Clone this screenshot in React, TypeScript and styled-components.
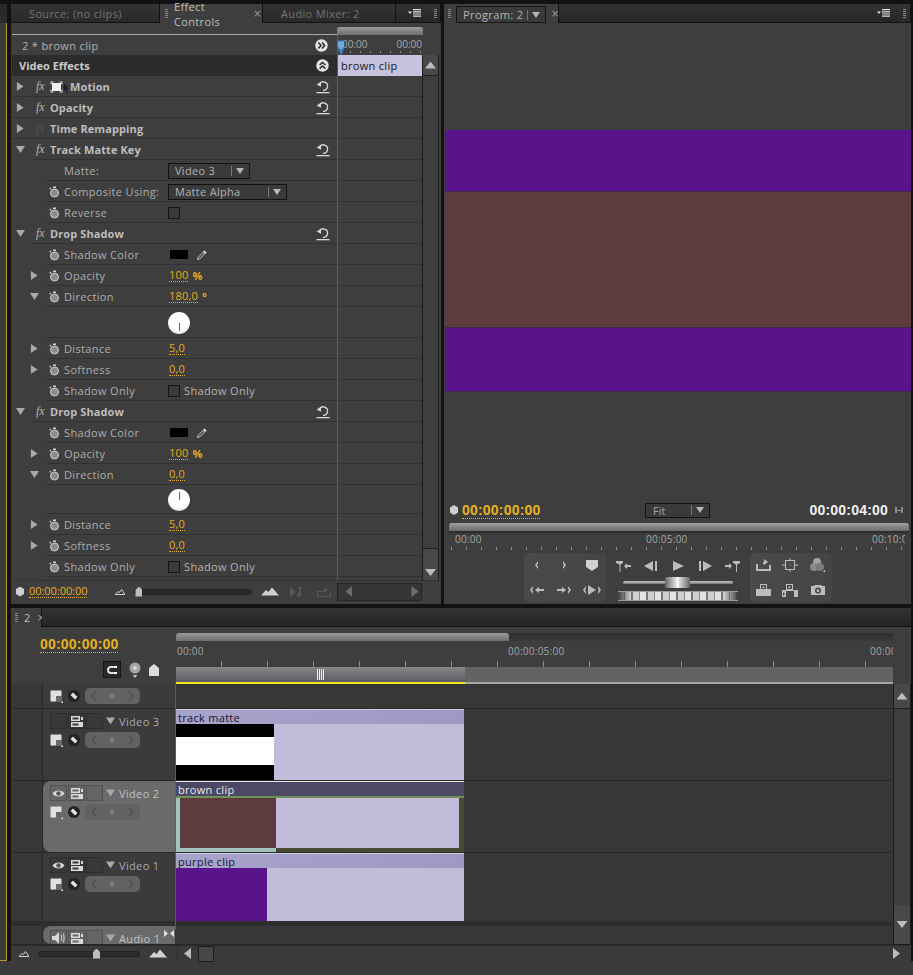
import React from "react";
import styled, { createGlobalStyle } from "styled-components";

const Global = createGlobalStyle`
  html, body { margin: 0; padding: 0; background: #3b3b3b; }
  * { box-sizing: border-box; }
`;

const uiFont = `"Open Sans", "Noto Sans", sans-serif`;

// ── Shell ─────────────────────────────────────────────────

const Root = styled.div`
  width: 913px;
  height: 975px;
  overflow: hidden;
  display: flex;
  flex-direction: column;
  background: #3b3b3b;
  font-family: ${uiFont};
  font-size: 11px;
  color: #b2b2b2;
`;

const Frame = styled.div`
  height: 961px;
  display: flex;
  background: #121212;
  padding-top: 4px;
`;

const LeftStrip = styled.div`
  width: 11px;
  display: flex;
  flex-direction: column;
`;

const LeftStripTab = styled.div`
  height: 19px;
  width: 7px;
  background: #2a2a2a;
`;

const LeftStripBody = styled.div`
  flex: 1;
  width: 7px;
  background: #3a3a3a;
  border-right: 1px solid #b59a35;
  border-bottom: 1px solid #b59a35;
`;

const Main = styled.div`
  width: 900px;
  display: flex;
  flex-direction: column;
  gap: 4px;
`;

const TopRow = styled.div`
  height: 600px;
  display: flex;
  gap: 3px;
`;

const Panel = styled.section<{ $w?: number }>`
  width: ${(p) => (p.$w ? `${p.$w}px` : "auto")};
  flex: ${(p) => (p.$w ? "none" : 1)};
  display: flex;
  flex-direction: column;
  background: #3e3e3e;
  min-height: 0;
`;

// ── Tabs ──────────────────────────────────────────────────

const TabBar = styled.div`
  height: 19px;
  flex: none;
  display: flex;
  background: #262626;
`;

const Tab = styled.div<{ $w: number; $on?: boolean; $pad?: number }>`
  width: ${(p) => p.$w}px;
  display: flex;
  align-items: center;
  padding-left: ${(p) => p.$pad ?? 18}px;
  gap: 6px;
  background: ${(p) => (p.$on ? "#3e3e3e" : "linear-gradient(#333, #292929)")};
  border-right: 1px solid #121212;
  border-bottom: ${(p) => (p.$on ? "none" : "1px solid #121212")};
  color: ${(p) => (p.$on ? "#bdbdbd" : "#757575")};
  font-size: 11px;
  letter-spacing: 0.35px;
`;

const TabFill = styled.div<{ $end?: boolean }>`
  flex: 1;
  display: flex;
  align-items: center;
  justify-content: flex-end;
  padding-right: 8px;
  background: linear-gradient(#333, #252525);
  border-bottom: 1px solid #121212;
`;

const Grip = styled.span`
  width: 3px;
  height: 9px;
  flex: none;
  background: repeating-linear-gradient(#8a8a8a 0 1px, transparent 1px 2px);
`;

const Close = styled.span`
  color: #999;
  font-size: 10px;
  font-family: "DejaVu Sans", sans-serif;
`;

const TabSelect = styled.div`
  width: 90px;
  height: 17px;
  margin-top: 2px;
  display: flex;
  align-items: center;
  justify-content: space-between;
  padding: 0 5px 0 6px;
  background: #3a3a3a;
  border: 1px solid #151515;
  color: #b5b5b5;
  letter-spacing: 0.4px;
`;

const Divider = styled.span`
  width: 1px;
  height: 10px;
  background: #777;
  margin-left: auto;
  margin-right: 4px;
`;

// ── Small shapes ──────────────────────────────────────────

const Twirl = styled.span<{ $open?: boolean; $none?: boolean }>`
  width: 9px;
  height: 9px;
  flex: none;
  display: inline-block;
  visibility: ${(p) => (p.$none ? "hidden" : "visible")};
  background: #a9a9a9;
  clip-path: ${(p) =>
    p.$open
      ? "polygon(0 10%, 100% 10%, 50% 90%)"
      : "polygon(10% 0, 85% 50%, 10% 100%)"};
`;

const Fx = styled.span<{ $dim?: boolean }>`
  width: 14px;
  margin-left: 11px;
  flex: none;
  font-family: "Liberation Serif", serif;
  font-style: italic;
  font-size: 12px;
  color: ${(p) => (p.$dim ? "#555" : "#b5b5b5")};
`;

const Svg = styled.svg`
  flex: none;
  display: block;
`;

const Reset = () => (
  <Svg width="14" height="14" viewBox="0 0 14 14">
    <path d="M3.4 4.2A4.3 4.3 0 1 1 7 10.4" fill="none" stroke="#d8d8d8" strokeWidth="1.3" />
    <path d="M0.6 4.6 5 1.8v5z" fill="#d8d8d8" />
    <rect x="0.5" y="12" width="13" height="1.3" fill="#d8d8d8" />
  </Svg>
);

const Stopwatch = () => (
  <Svg width="11" height="12" viewBox="0 0 11 12">
    <circle cx="5.5" cy="7" r="4" fill="#8c8c8c" stroke="#d0d0d0" strokeWidth="1" />
    <rect x="4" y="0.5" width="3" height="1.6" fill="#cfcfcf" />
    <rect x="0.6" y="1.8" width="1.6" height="1.6" fill="#cfcfcf" />
  </Svg>
);

const RoundGlyph = ({ dir }: { dir: "right" | "up" }) => (
  <Svg width="13" height="13" viewBox="0 0 13 13">
    <circle cx="6.5" cy="6.5" r="6.2" fill="#e4e4e4" />
    <g transform={dir === "up" ? "rotate(-90 6.5 6.5)" : undefined}>
      <path d="M3.4 3.6 6 6.5 3.4 9.4M7 3.6 9.6 6.5 7 9.4" fill="none" stroke="#2a2a2a" strokeWidth="1.5" />
    </g>
  </Svg>
);

const MotionGlyph = () => (
  <Svg width="20" height="12" viewBox="0 0 20 12">
    <rect x="2" y="2" width="9" height="8" fill="#f0f0f0" />
    <path d="M0.5 0.5h3v1h-2v2h-1zM9.5 0.5h3v3h-1v-2h-2zM0.5 8.5h1v2h2v1h-3zM11.5 8.5h1v3h-3v-1h2z" fill="#e0e0e0" />
    <path d="M14 2 18.5 8 16.5 8 18 11.5 16.8 12 15.4 8.6 14 10z" fill="#1d1d1d" />
  </Svg>
);

const Dropper = () => (
  <Svg width="10" height="10" viewBox="0 0 10 10">
    <path d="M0.5 9.5 1 7.5 6 2.5 7.5 4 2.5 9z" fill="none" stroke="#cfcfcf" />
    <path d="M6 1.5 7.5 0.5 9.5 2.5 8.5 4z" fill="#e5e5e5" />
  </Svg>
);

const Mountain = ({ big }: { big?: boolean }) =>
  big ? (
    <Svg width="18" height="9" viewBox="0 0 18 9">
      <path d="M0 8.5 5 3 7.5 5 11 0.5 18 8.5z" fill="#d2d2d2" />
    </Svg>
  ) : (
    <Svg width="10" height="6" viewBox="0 0 10 6">
      <path d="M0 5.5 3 2.5 4.5 3.5 6.5 0.5 10 5.5z" fill="none" stroke="#d2d2d2" />
    </Svg>
  );

const MenuGlyph = () => (
  <Svg width="14" height="8" viewBox="0 0 14 8">
    <path d="M0 2.5h4L2 5z" fill="#e0e0e0" />
    <path d="M5 0h8v1.2H5zM5 2.2h8v1.2H5zM5 4.4h8v1.2H5zM5 6.6h8v1.2H5z" fill="#e0e0e0" />
  </Svg>
);

const CaretDown = () => (
  <Svg width="8" height="6" viewBox="0 0 8 6">
    <path d="M0 0h8L4 6z" fill="#b8b8b8" />
  </Svg>
);

const PlayheadGlyph = () => (
  <Svg width="8" height="16" viewBox="0 0 8 16">
    <path d="M0.5 0.5h7v7L4 15.5 0.5 7.5z" fill="#3d7fc2" />
    <path d="M2 1.5v6M4 1.5v8M6 1.5v6" stroke="#a9d2f5" strokeWidth="1" />
  </Svg>
);

const Pin = styled.span`
  width: 8px;
  height: 10px;
  flex: none;
  background: #d0d0d0;
  clip-path: polygon(0 25%, 50% 0, 100% 25%, 100% 75%, 50% 100%, 0 75%);
`;

// ── Effect Controls ───────────────────────────────────────

const EffectBody = styled.div`
  position: relative;
  flex: 1;
  display: flex;
  flex-direction: column;
  padding-left: 1px;
`;

const RedLine = styled.div<{ $top: number; $bottom: number; $left: number }>`
  position: absolute;
  top: ${(p) => p.$top}px;
  bottom: ${(p) => p.$bottom}px;
  left: ${(p) => p.$left}px;
  width: 1px;
  background: #b03a3a;
  z-index: 3;
`;

const MiniNavRow = styled.div`
  height: 12px;
  flex: none;
  display: flex;
  align-items: flex-end;
`;

const MiniNavRule = styled.div`
  width: 325px;
  height: 1px;
  background: #a8a8a8;
  margin-bottom: 0;
`;

const NavBar = styled.div<{ $w: number }>`
  width: ${(p) => p.$w}px;
  height: 8px;
  background: linear-gradient(#9b9b9b, #6e6e6e);
  border-radius: 3px 3px 0 0;
  flex: none;
`;

const ClipRow = styled.div`
  height: 20px;
  flex: none;
  display: flex;
`;

const ClipName = styled.div`
  width: 325px;
  display: flex;
  align-items: center;
  justify-content: space-between;
  padding: 0 9px 0 10px;
  letter-spacing: 0.35px;
`;

const MiniRuler = styled.div`
  position: relative;
  width: 85px;
  overflow: hidden;
  display: flex;
  padding-left: 5px;
  justify-content: space-between;
  color: #a8a8a8;
  font-size: 10px;
  white-space: nowrap;
  padding-top: 2px;
  background: repeating-linear-gradient(90deg, #8a8a8a 0 1px, transparent 1px 10px) no-repeat 3px 16px / 100% 2px;
`;

const PlayheadOver = styled.div<{ $left: number; $top: number }>`
  position: absolute;
  left: ${(p) => p.$left}px;
  top: ${(p) => p.$top}px;
  z-index: 4;
`;

const RowsWrap = styled.div`
  flex: 1;
  display: flex;
  min-height: 0;
`;

const RowsCol = styled.div`
  width: 410px;
  display: flex;
  flex-direction: column;
`;

const HeaderRow = styled.div`
  height: 21px;
  flex: none;
  display: flex;
`;

const HeaderLeft = styled.div`
  width: 325px;
  display: flex;
  align-items: center;
  justify-content: space-between;
  padding: 0 8px 0 7px;
  background: #2c2c2c;
  font-weight: 700;
  color: #c9c9c9;
`;

const ClipChip = styled.div`
  width: 85px;
  display: flex;
  align-items: center;
  padding-left: 4px;
  background: #c7c3df;
  color: #16162a;
  letter-spacing: 0.3px;
`;

const Row = styled.div<{ $h?: number }>`
  height: ${(p) => p.$h ?? 21}px;
  flex: none;
  display: flex;
`;

const RowLeft = styled.div<{ $rule: number; $pad: number }>`
  width: 325px;
  display: flex;
  align-items: center;
  padding-left: ${(p) => p.$pad}px;
  background: linear-gradient(#313131, #313131) no-repeat ${(p) => p.$rule}px 100% / 100% 1px;
`;

const RowRight = styled.div`
  width: 85px;
  border-bottom: 1px solid #313131;
`;

const TitleName = styled.span`
  margin-left: 0;
  font-weight: 700;
  color: #bdbdbd;
  letter-spacing: 0.1px;
`;

const RightSlot = styled.span`
  margin-left: auto;
  margin-right: 7px;
`;

const ParamIcon = styled.span`
  margin-left: 10px;
  width: 15px;
  flex: none;
`;

const ParamLabel = styled.span`
  width: 105px;
  flex: none;
  letter-spacing: 0.35px;
  color: #adadad;
`;

const Value = styled.span`
  color: #e5ad1e;
  border-bottom: 1px dotted #e5ad1e;
  line-height: 12px;
  letter-spacing: 0.2px;
`;

const Unit = styled.span`
  color: #e5ad1e;
  margin-left: 4px;
  font-weight: 700;
`;

const Select = styled.div<{ $w: number }>`
  width: ${(p) => p.$w}px;
  height: 16px;
  margin-left: -1px;
  display: flex;
  align-items: center;
  padding: 0 5px 0 6px;
  background: #3a3a3a;
  border: 1px solid #121212;
  letter-spacing: 0.3px;
`;

const Check = styled.span`
  width: 12px;
  height: 12px;
  margin-left: -1px;
  flex: none;
  background: #3a3a3a;
  border: 1px solid #161616;
`;

const CheckText = styled.span`
  margin-left: 4px;
  letter-spacing: 0.35px;
`;

const Swatch = styled.span`
  width: 18px;
  height: 9px;
  margin: 0 9px 0 1px;
  background: #000;
`;

const Dial = styled.div<{ $down?: boolean }>`
  width: 22px;
  height: 22px;
  margin: 0 0 0 -1px;
  display: flex;
  justify-content: center;
  align-items: ${(p) => (p.$down ? "flex-end" : "flex-start")};
  padding: 3px 0;
  border-radius: 50%;
  background: radial-gradient(circle at 50% 40%, #fff 55%, #c9c9c9);
`;

const DialHand = styled.span`
  width: 1px;
  height: 8px;
  background: #666;
`;

const VScroll = styled.div<{ $w: number }>`
  width: ${(p) => p.$w}px;
  flex: none;
  display: flex;
  flex-direction: column;
  background: #484848;
`;

const ScrollBtn = styled.div<{ $h: number; $down?: boolean }>`
  height: ${(p) => p.$h}px;
  flex: none;
  display: flex;
  justify-content: center;
  align-items: ${(p) => (p.$down ? "flex-end" : "center")};
  padding-bottom: ${(p) => (p.$down ? 4 : 0)}px;
  background: #484848;
  border-bottom: ${(p) => (p.$down ? "none" : "1px solid #1c1c1c")};
  border-top: ${(p) => (p.$down ? "1px solid #1c1c1c" : "none")};
  border-left: 1px solid #1c1c1c;
  border-right: 1px solid #1c1c1c;
`;

const ScrollThumb = styled.div`
  flex: 1;
  background: #3e3e3e;
  border-left: 1px solid #1c1c1c;
  border-right: 1px solid #1c1c1c;
`;

const Arrow = styled.span<{ $dir: "up" | "down" | "left" | "right"; $dim?: boolean }>`
  flex: none;
  width: ${(p) => (p.$dir === "up" || p.$dir === "down" ? 11 : 7)}px;
  height: ${(p) => (p.$dir === "up" || p.$dir === "down" ? 7 : 11)}px;
  background: ${(p) => (p.$dim ? "#6d6d6d" : "#bcbcbc")};
  clip-path: ${(p) =>
    ({
      up: "polygon(50% 0, 100% 100%, 0 100%)",
      down: "polygon(0 0, 100% 0, 50% 100%)",
      left: "polygon(100% 0, 100% 100%, 0 50%)",
      right: "polygon(0 0, 100% 50%, 0 100%)",
    })[p.$dir]};
`;

const EffectFoot = styled.div`
  height: 24px;
  flex: none;
  display: flex;
  align-items: center;
  padding: 2px 0 4px 4px;
  border-top: 1px solid #333;
`;

const FootTime = styled.span`
  margin: 0 28px 0 5px;
  color: #e5ad1e;
  border-bottom: 1px dotted #e5ad1e;
  line-height: 12px;
  font-size: 11px;
  letter-spacing: -0.05px;
`;

const ZoomSlider = styled.div<{ $w: number; $at: number }>`
  position: relative;
  width: ${(p) => p.$w}px;
  height: 6px;
  flex: none;
  background: #2c2c2c;
  border: 1px solid #222;
  border-radius: 3px;
  &::after {
    content: "";
    position: absolute;
    top: -3px;
    left: ${(p) => p.$at}px;
    width: 7px;
    height: 10px;
    background: #bdbdbd;
    clip-path: polygon(0 35%, 50% 0, 100% 35%, 100% 100%, 0 100%);
  }
`;

const FootNav = styled.div`
  width: 85px;
  height: 18px;
  margin-left: 6px;
  display: flex;
  align-items: center;
  justify-content: space-between;
  padding: 0 3px 0 7px;
  background: #363636;
  border: 1px solid #262626;
`;

const FootDim = styled.span`
  margin-left: 11px;
  display: flex;
`;

const EffectTitle = ({
  open,
  dim,
  name,
  rule,
  reset = true,
  icon,
}: {
  open?: boolean;
  dim?: boolean;
  name: string;
  rule: number;
  reset?: boolean;
  icon?: React.ReactNode;
}) => (
  <Row>
    <RowLeft $rule={rule} $pad={4}>
      <Twirl $open={open} />
      <Fx $dim={dim}>fx</Fx>
      {icon}
      <TitleName>{name}</TitleName>
      {reset && (
        <RightSlot>
          <Reset />
        </RightSlot>
      )}
    </RowLeft>
    <RowRight />
  </Row>
);

const Param = ({
  label,
  twirl,
  open,
  watch = true,
  h,
  children,
}: {
  label?: string;
  twirl?: boolean;
  open?: boolean;
  watch?: boolean;
  h?: number;
  children?: React.ReactNode;
}) => (
  <Row $h={h}>
    <RowLeft $rule={34} $pad={18}>
      <Twirl $open={open} $none={!twirl} />
      <ParamIcon>{watch && label && <Stopwatch />}</ParamIcon>
      <ParamLabel>{label}</ParamLabel>
      {children}
    </RowLeft>
    <RowRight />
  </Row>
);

const DropShadow = ({ angle, down }: { angle: string; down?: boolean }) => (
  <>
    <EffectTitle open name="Drop Shadow" rule={20} />
    <Param label="Shadow Color">
      <Swatch />
      <Dropper />
    </Param>
    <Param label="Opacity" twirl>
      <Value>100</Value>
      <Unit>%</Unit>
    </Param>
    <Param label="Direction" twirl open>
      <Value>{angle}</Value>
      {down && <Unit>°</Unit>}
    </Param>
    <Param watch={false} h={down ? 31 : 29}>
      <Dial $down={down}>
        <DialHand />
      </Dial>
    </Param>
    <Param label="Distance" twirl>
      <Value>5,0</Value>
    </Param>
    <Param label="Softness" twirl>
      <Value>0,0</Value>
    </Param>
    <Param label="Shadow Only">
      <Check />
      <CheckText>Shadow Only</CheckText>
    </Param>
  </>
);

const EffectControls = () => (
  <Panel $w={430}>
    <TabBar>
      <Tab $w={149}>Source: (no clips)</Tab>
      <Tab $w={103} $on $pad={5}>
        <Grip />
        Effect Controls
        <Close>×</Close>
      </Tab>
      <Tab $w={133}>Audio Mixer: 2</Tab>
      <TabFill>
        <MenuGlyph />
      </TabFill>
      <Tab $w={11} $pad={4}>
        <Grip />
      </Tab>
    </TabBar>
    <EffectBody>
      <RedLine $top={12} $bottom={24} $left={326} />
      <PlayheadOver $left={326} $top={17}>
        <PlayheadGlyph />
      </PlayheadOver>
      <MiniNavRow>
        <MiniNavRule />
        <NavBar $w={86} />
      </MiniNavRow>
      <ClipRow>
        <ClipName>
          2 * brown clip
          <RoundGlyph dir="right" />
        </ClipName>
        <MiniRuler>
          <span>00:00</span>
          <span>00:00</span>
        </MiniRuler>
      </ClipRow>
      <RowsWrap>
        <RowsCol>
          <HeaderRow>
            <HeaderLeft>
              Video Effects
              <RoundGlyph dir="up" />
            </HeaderLeft>
            <ClipChip>brown clip</ClipChip>
          </HeaderRow>
          <EffectTitle name="Motion" rule={0} icon={<MotionGlyph />} />
          <EffectTitle name="Opacity" rule={0} />
          <EffectTitle name="Time Remapping" rule={0} dim reset={false} />
          <EffectTitle name="Track Matte Key" rule={20} open />
          <Param label="Matte:" watch={false}>
            <Select $w={82}>
              Video 3
              <Divider />
              <CaretDown />
            </Select>
          </Param>
          <Param label="Composite Using:">
            <Select $w={119}>
              Matte Alpha
              <Divider />
              <CaretDown />
            </Select>
          </Param>
          <Param label="Reverse">
            <Check />
          </Param>
          <DropShadow angle="180,0" down />
          <DropShadow angle="0,0" />
        </RowsCol>
        <VScroll $w={17}>
          <ScrollBtn $h={21}>
            <Arrow $dir="up" />
          </ScrollBtn>
          <ScrollThumb />
          <ScrollBtn $h={32} $down>
            <Arrow $dir="down" />
          </ScrollBtn>
        </VScroll>
      </RowsWrap>
      <EffectFoot>
        <Pin />
        <FootTime>00:00:00:00</FootTime>
        <Mountain />
        <ZoomSlider $w={118} $at={0} style={{ margin: "0 9px" }} />
        <Mountain big />
        <FootDim>
          <Svg width="14" height="10" viewBox="0 0 14 10">
            <path d="M0 0 6 5 0 10zM9 0h2l2 2h-2v6a2 2 0 1 1-2-2z" fill="#565656" />
          </Svg>
        </FootDim>
        <FootDim style={{ marginLeft: 13 }}>
          <Svg width="14" height="10" viewBox="0 0 14 10">
            <path d="M0 4h7V0l4 3-4 3V5H1v4h12V4h1v6H0z" fill="#565656" />
          </Svg>
        </FootDim>
        <FootNav>
          <Arrow $dir="left" $dim />
          <Arrow $dir="right" $dim />
        </FootNav>
      </EffectFoot>
    </EffectBody>
  </Panel>
);

// ── Program monitor ───────────────────────────────────────

const ProgramTab = styled.div`
  width: 115px;
  display: flex;
  align-items: flex-start;
  gap: 3px;
  padding: 0 0 0 4px;
  background: #3e3e3e;
  border-right: 1px solid #121212;
`;

const ProgramTabInner = styled.div`
  display: flex;
  align-items: center;
  gap: 5px;
  height: 19px;
`;

const VideoArea = styled.div`
  flex: 1;
  display: flex;
  flex-direction: column;
  padding: 107px 0 0 1px;
`;

const Band = styled.div<{ $h: number; $c: string }>`
  height: ${(p) => p.$h}px;
  flex: none;
  background: ${(p) => p.$c};
  border-bottom: 1px solid #3b2a45;
`;

const TimeRow = styled.div`
  height: 24px;
  flex: none;
  display: flex;
  align-items: center;
  padding: 0 8px 2px 6px;
`;

const BigTime = styled.span<{ $w?: boolean }>`
  font-family: "Liberation Sans", sans-serif;
  font-size: 14px;
  font-weight: 700;
  letter-spacing: 0.2px;
  color: ${(p) => (p.$w ? "#f0f0f0" : "#e8b21c")};
  border-bottom: ${(p) => (p.$w ? "none" : "1px dotted #e8b21c")};
  line-height: 16px;
`;

const TimeCurrent = styled.div`
  display: flex;
  align-items: center;
  gap: 4px;
  width: 195px;
`;

const FitSelect = styled.div`
  width: 65px;
  height: 15px;
  display: flex;
  align-items: center;
  padding: 0 5px 0 7px;
  background: #3a3a3a;
  border: 1px solid #141414;
  color: #a5a5a5;
`;

const TimeEnd = styled.div`
  margin-left: auto;
  display: flex;
  align-items: center;
  gap: 7px;
`;

const Handles = styled.span`
  width: 8px;
  height: 6px;
  border: 1px solid #888;
  border-width: 0 2px;
  background: linear-gradient(#999, #999) no-repeat center / 100% 1px;
`;

const MonitorNav = styled.div`
  height: 8px;
  flex: none;
  margin: 0 2px 0 5px;
  background: linear-gradient(#a0a0a0, #6b6b6b);
  border-radius: 3px 3px 0 0;
  box-shadow: 0 2px 2px #2c2c2c;
`;

const Ruler = styled.div<{ $tick: number; $offset: number; $y: number }>`
  display: flex;
  overflow: hidden;
  white-space: nowrap;
  color: #a6a6a6;
  font-size: 10px;
  letter-spacing: 0.25px;
  background: repeating-linear-gradient(
      90deg,
      #888 0 1px,
      transparent 1px ${(p) => p.$tick}px
    )
    no-repeat ${(p) => p.$offset}px ${(p) => p.$y}px / 100% 3px;
`;

const RulerLabel = styled.span<{ $w?: number }>`
  width: ${(p) => (p.$w ? `${p.$w}px` : "auto")};
  flex: none;
`;

const MonitorRuler = styled(Ruler)`
  height: 19px;
  margin: 0 6px 0 5px;
  padding: 1px 0 0 6px;
`;

const Transport = styled.div`
  height: 51px;
  flex: none;
  margin-top: 3px;
  display: flex;
  justify-content: center;
`;

const BtnGroup = styled.div<{ $w: number }>`
  width: ${(p) => p.$w}px;
  display: grid;
  grid-template-columns: repeat(3, 1fr);
  grid-template-rows: 1fr 1fr;
  place-items: center;
  background: linear-gradient(90deg, #4a4a4a, #454545);
  border-radius: 5px;
  margin-bottom: 2px;
`;

const CenterGroup = styled.div`
  width: 144px;
  display: flex;
  flex-direction: column;
  align-items: center;
`;

const CenterBtns = styled.div`
  width: 100%;
  height: 25px;
  display: flex;
  align-items: center;
  justify-content: space-between;
  padding: 0 10px;
`;

const Jog = styled.div`
  position: relative;
  width: 110px;
  height: 3px;
  margin-top: 3px;
  background: linear-gradient(#c8c8c8, #777);
  border-radius: 2px;
  &::after {
    content: "";
    position: absolute;
    left: 42px;
    top: -4px;
    width: 25px;
    height: 11px;
    background: linear-gradient(90deg, #666, #e2e2e2 45%, #fff 50%, #e2e2e2 55%, #666);
    border-radius: 2px;
  }
`;

const Shuttle = styled.div`
  width: 120px;
  height: 10px;
  margin-top: 7px;
  background:
    linear-gradient(90deg, #3e3e3e, transparent 12%, transparent 88%, #3e3e3e),
    repeating-linear-gradient(90deg, #cfcfcf 0 6px, #8a8a8a 6px 7px, #e2e2e2 7px 13px, #777 13px 15px);
  border-top: 1px solid #9a9a9a;
  border-bottom: 1px solid #9a9a9a;
`;

const Tool = ({ d, w = 16, fill = "#bcbcbc" }: { d: string; w?: number; fill?: string }) => (
  <Svg width={w} height="14" viewBox={`0 0 ${w} 14`}>
    <path d={d} fill={fill} />
  </Svg>
);

const icons = {
  markIn: "M9 3 6 7l3 4V8.6L8 7l1-1.6z",
  markOut: "M7 3l3 4-3 4V8.6L8 7 7 5.4z",
  marker: "M2 2h12v7l-6 4-6-4z",
  goIn: "M0 2h7v2L4.5 5.5V13h-1V5.5L0 4zM15 6h-4V4L8 7l3 3V8h4z",
  stepBack: "M1 7l9-5v10zM12 2h2v10h-2z",
  play: "M3 2l11 5-11 5z",
  stepFwd: "M2 2h2v10H2zM6 2l9 5-9 5z",
  goOut: "M1 6h4V4l3 3-3 3V8H1zM9 2h7v2l-3 1.5V13h-1V5.500L9 4z",
  goPrev: "M4 3 1 7l3 4V8.600L3 7l1-1.600zM15 6h-5V4L6 7l4 3V8h5z",
  goNext: "M1 6h5V4l4 3-4 3V8H1zM12 3l3 4-3 4V8.600L13 7l-1-1.600z",
  playIo: "M3 3 0 7l3 4V8.600L2 7l1-1.600zM5 2l8 5-8 5zM15 3l3 4-3 4V8.600L16 7l-1-1.600z",
  lift: "M1 6h7V4h1V1l4 3-4 3V6H3v5h11V7h2v6H1z",
  safe: "M3 2H13V12H3zM4 3V11H12V3zM7.500 6.500h1v1h-1zM0 6.500h3v1H0zM13 6.500h3v1h-3zM7.500 0h1v2h-1zM7.500 12h1v2h-1z",
  insert: "M5 1h7v5h4v7H1V6h4zM6 2v4h5V2zM8.500 3 10 5H7z",
  overlay: "M5 1h7v6h5v7h-4V8H5v6H1V7h4zM6 2v4h5V2zM8.500 3 10 5H7zM2 9v4l2-2zM16 9v4l-2-2z",
  camera: "M1 3h3l1-1h6l1 1h3v9H1zM8 4.500a3 3 0 1 0 0 6 3 3 0 0 0 0-6zM8 6a1.500 1.500 0 1 1 0 3 1.500 1.500 0 0 1 0-3z",
};

const Program = () => (
  <Panel $w={467}>
    <TabBar>
      <ProgramTab>
        <ProgramTabInner>
          <Grip />
          <TabSelect>
            Program: 2
            <Divider />
            <CaretDown />
          </TabSelect>
          <Close>×</Close>
        </ProgramTabInner>
      </ProgramTab>
      <TabFill>
        <MenuGlyph />
      </TabFill>
      <Tab $w={12} $pad={4}>
        <Grip />
      </Tab>
    </TabBar>
    <VideoArea>
      <Band $h={62} $c="#59138b" />
      <Band $h={136} $c="#5e3b3c" />
      <Band $h={64} $c="#59138b" />
    </VideoArea>
    <TimeRow>
      <TimeCurrent>
        <Pin />
        <BigTime>00:00:00:00</BigTime>
      </TimeCurrent>
      <FitSelect>
        Fit
        <Divider />
        <CaretDown />
      </FitSelect>
      <TimeEnd>
        <BigTime $w>00:00:04:00</BigTime>
        <Handles />
      </TimeEnd>
    </TimeRow>
    <MonitorNav />
    <MonitorRuler $tick={15} $offset={2} $y={16}>
      <RulerLabel $w={191}>00:00</RulerLabel>
      <RulerLabel $w={226}>00:05:00</RulerLabel>
      <RulerLabel>00:10:00</RulerLabel>
    </MonitorRuler>
    <Transport>
      <BtnGroup $w={82}>
        <Tool d={icons.markIn} />
        <Tool d={icons.markOut} />
        <Tool d={icons.marker} fill="#d0d0d0" />
        <Tool d={icons.goPrev} />
        <Tool d={icons.goNext} />
        <Tool d={icons.playIo} w={18} />
      </BtnGroup>
      <CenterGroup>
        <CenterBtns>
          <Tool d={icons.goIn} />
          <Tool d={icons.stepBack} />
          <Tool d={icons.play} />
          <Tool d={icons.stepFwd} />
          <Tool d={icons.goOut} />
        </CenterBtns>
        <Jog />
        <Shuttle />
      </CenterGroup>
      <BtnGroup $w={82}>
        <Tool d={icons.lift} w={17} />
        <Tool d={icons.safe} />
        <Svg width="17" height="16" viewBox="0 0 17 16">
          <circle cx="8" cy="5" r="4" fill="#a2a2a2" />
          <circle cx="5" cy="10" r="4" fill="#8a8a8a" />
          <circle cx="11" cy="10" r="4" fill="#7a7a7a" />
          <path d="M14 15l2-2v2z" fill="#ddd" />
        </Svg>
        <Tool d={icons.insert} w={17} />
        <Tool d={icons.overlay} w={18} />
        <Tool d={icons.camera} />
      </BtnGroup>
    </Transport>
  </Panel>
);

// ── Timeline ──────────────────────────────────────────────

const TimelinePanel = styled(Panel)`
  flex: none;
  height: 353px;
  width: 900px;
`;

const TimelineHead = styled.div`
  height: 57px;
  flex: none;
  display: flex;
`;

const HeadLeft = styled.div`
  width: 165px;
  flex: none;
  display: flex;
  flex-direction: column;
  padding: 9px 0 0 29px;
`;

const HeadTime = styled(BigTime)`
  align-self: flex-start;
`;

const ToolRow = styled.div`
  margin: 8px 0 0 63px;
  display: flex;
  align-items: center;
  gap: 8px;
`;

const SnapBtn = styled.div`
  width: 18px;
  height: 17px;
  display: flex;
  align-items: center;
  justify-content: center;
  background: #2a2a2a;
  border: 1px solid #141414;
`;

const HeadRight = styled.div`
  width: 717px;
  flex: none;
  display: flex;
  flex-direction: column;
  padding-top: 6px;
`;

const TimelineTrough = styled.div`
  height: 8px;
  flex: none;
  background: linear-gradient(#2e2e2e, #3a3a3a);
`;

const TimelineRuler = styled(Ruler)`
  height: 26px;
  padding: 3px 0 0 1px;
  background-position: -1px 20px;
  background-size: 100% 6px;
`;

const WorkBar = styled.div`
  height: 17px;
  flex: none;
  display: flex;
  background: #636363;
  border-bottom: 2px solid #a8a8a8;
`;

const WorkRange = styled.div`
  width: 289px;
  height: 17px;
  flex: none;
  display: flex;
  align-items: center;
  justify-content: center;
  background: linear-gradient(#868686, #5c5c66);
  border-bottom: 2px solid #f0e81c;
  padding-left: 0;
`;

const WorkGrip = styled.span`
  width: 7px;
  height: 11px;
  background: repeating-linear-gradient(90deg, #eee 0 1px, #777 1px 2px);
`;

const TrackArea = styled.div`
  flex: 1;
  min-height: 0;
  display: flex;
`;

const TrackList = styled.div`
  position: relative;
  flex: 1;
  display: flex;
  flex-direction: column;
  overflow: hidden;
`;

const TrackRow = styled.div<{ $h: number; $gap?: boolean }>`
  height: ${(p) => p.$h}px;
  flex: none;
  display: flex;
  background: #373737;
  border-bottom: ${(p) => (p.$gap ? "5px solid #2d2d2d" : "1px solid #272727")};
`;

const TrackGutter = styled.div`
  width: 32px;
  flex: none;
  border-right: 1px solid #2a2a2a;
  background: #383838;
`;

const TrackHead = styled.div<{ $on?: boolean }>`
  width: 132px;
  flex: none;
  display: flex;
  flex-direction: column;
  gap: 3px;
  padding: 4px 0 0 7px;
  background: ${(p) => (p.$on ? "#6a6a6a" : "#3b3b3b")};
  border-radius: ${(p) => (p.$on ? "8px 0 0 8px" : "0")};
  color: ${(p) => (p.$on ? "#c2c2c2" : "#a8a8a8")};
  letter-spacing: 0.35px;
`;

const HeadLine = styled.div`
  display: flex;
  align-items: center;
  height: 16px;
`;

const TrackBtn = styled.span<{ $on?: boolean }>`
  width: 17px;
  height: 16px;
  margin-right: 1px;
  flex: none;
  display: flex;
  align-items: center;
  justify-content: center;
  background: ${(p) => (p.$on ? "rgba(255,255,255,0.05)" : "rgba(0,0,0,0.04)")};
  border: 1px solid rgba(0, 0, 0, 0.18);
`;

const TrackName = styled.span`
  margin-left: 4px;
`;

const TrackTwirl = styled(Twirl)`
  margin-left: 2px;
`;

const Pill = styled.div`
  width: 55px;
  height: 16px;
  margin-left: 4px;
  display: flex;
  align-items: center;
  justify-content: space-around;
  background: #626262;
  border-radius: 5px;
`;

const Lane = styled.div`
  flex: 1;
  min-width: 0;
  display: flex;
`;

const Clip = styled.div<{ $on?: boolean }>`
  width: 288px;
  margin-left: 1px;
  display: flex;
  flex-direction: column;
  background: #c0bcd9;
  border-top: 1px solid ${(p) => (p.$on ? "#e8e8e8" : "#d2d0e4")};
`;

const ClipTitle = styled.div<{ $on?: boolean }>`
  height: 14px;
  flex: none;
  padding-left: 2px;
  display: flex;
  align-items: center;
  color: ${(p) => (p.$on ? "#e8e8e8" : "#16162a")};
  background: ${(p) => (p.$on ? "#4c4966" : "linear-gradient(90deg, #a7a3cb, #9d99c3)")};
  letter-spacing: 0.3px;
`;

const ClipBody = styled.div`
  flex: 1;
  min-height: 0;
  display: flex;
`;

const MatteThumb = styled.div`
  width: 98px;
  flex: none;
  background: linear-gradient(#000 0 13px, #fff 13px 41px, #000 41px);
`;

const PurpleThumb = styled.div`
  width: 91px;
  flex: none;
  background: #59138b;
`;

const SelectedBody = styled.div`
  flex: 1;
  min-height: 0;
  display: grid;
  grid-template-columns: 4px 96px 1fr 5px;
  grid-template-rows: 1fr 4px;
  border-top: 2px solid #6d9254;
`;

const Cell = styled.div<{ $c: string; $span?: number }>`
  background: ${(p) => p.$c};
  grid-column: span ${(p) => p.$span ?? 1};
`;

const TimelineFoot = styled.div`
  height: 16px;
  flex: none;
  display: flex;
  align-items: center;
  padding-left: 8px;
  background: #3a3a3a;
  border-top: 1px solid #2c2c2c;
`;

const HScroll = styled.div`
  flex: 1;
  height: 16px;
  margin: 0 8px 0 10px;
  display: flex;
  align-items: center;
  background: #3a3a3a;
  border-left: 1px solid #2c2c2c;
  padding-left: 6px;
  gap: 7px;
`;

const HThumb = styled.div`
  width: 16px;
  height: 16px;
  background: #474747;
  border: 1px solid #1d1d1d;
`;

const HEnd = styled.span`
  margin-left: auto;
  margin-right: 3px;
  display: flex;
`;

const AudioMark = styled.span`
  margin-left: auto;
  margin-right: 1px;
  align-self: flex-start;
`;

const CompositeIcon = () => (
  <Svg width="13" height="13" viewBox="0 0 13 13">
    <rect x="0.5" y="0.5" width="11" height="11" fill="#e0e0e0" />
    <path d="M6 6h6v6H6z" fill="#6a6a6a" />
    <path d="M11 13l2-2v2z" fill="#fff" />
  </Svg>
);

const MuteIcon = () => (
  <Svg width="14" height="14" viewBox="0 0 14 14">
    <circle cx="7" cy="7" r="6" fill="#222" />
    <path d="M3.500 6 6 3.500 10.500 8 8 10.500z" fill="#e0e0e0" />
  </Svg>
);

const EyeIcon = () => (
  <Svg width="13" height="9" viewBox="0 0 13 9">
    <path d="M0.500 4.500C3 0.500 10 0.500 12.500 4.500 10 8.500 3 8.500 0.500 4.500z" fill="#d8d8d8" />
    <circle cx="6.500" cy="4.500" r="2.200" fill="#555" />
  </Svg>
);

const SpeakerIcon = () => (
  <Svg width="13" height="12" viewBox="0 0 13 12">
    <path d="M0 4h3l4-4v12L3 8H0z" fill="#d8d8d8" />
    <path d="M9 3c1 1.500 1 4.500 0 6M11 1.500c1.500 2.500 1.500 6.500 0 9" fill="none" stroke="#d8d8d8" />
  </Svg>
);

const FilmIcon = () => (
  <Svg width="12" height="11" viewBox="0 0 12 11">
    <path d="M0 0h9v5H0zM1.500 1.500v2h6v-2zM0 6h12v5H0zM1.500 7.500v2h6v-2z" fill="#d8d8d8" fillRule="evenodd" />
    <path d="M10 1h2v3h-2z" fill="#d8d8d8" />
  </Svg>
);

const PillContent = () => (
  <Pill>
    <Svg width="6" height="10" viewBox="0 0 6 10">
      <path d="M5 1 1 5l4 4" fill="none" stroke="#4f4f4f" strokeWidth="1.300" />
    </Svg>
    <Svg width="6" height="6" viewBox="0 0 6 6">
      <path d="M3 0 6 3 3 6 0 3z" fill="#7e7e7e" />
    </Svg>
    <Svg width="6" height="10" viewBox="0 0 6 10">
      <path d="M1 1l4 4-4 4" fill="none" stroke="#4f4f4f" strokeWidth="1.300" />
    </Svg>
  </Pill>
);

const TrackControls = ({
  name,
  eye,
  audio,
}: {
  name: string;
  eye?: boolean;
  audio?: boolean;
}) => (
  <HeadLine>
    <TrackBtn>{audio ? <SpeakerIcon /> : eye && <EyeIcon />}</TrackBtn>
    <TrackBtn>
      <FilmIcon />
    </TrackBtn>
    <TrackBtn />
    <TrackTwirl $open />
    <TrackName>{name}</TrackName>
    {audio && (
      <AudioMark>
        <Svg width="10" height="7" viewBox="0 0 10 7">
          <path d="M0 0l4 3.500L0 7zM10 0 6 3.500 10 7z" fill="#e0e0e0" />
        </Svg>
      </AudioMark>
    )}
  </HeadLine>
);

const BlendLine = () => (
  <HeadLine>
    <CompositeIcon />
    <span style={{ width: 4 }} />
    <MuteIcon />
    <PillContent />
  </HeadLine>
);

const Timeline = () => (
  <TimelinePanel>
    <TabBar>
      <Tab $w={31} $on $pad={4}>
        <Grip />
        <span>2</span>
        <Close>×</Close>
      </Tab>
      <TabFill />
    </TabBar>
    <TimelineHead>
      <HeadLeft>
        <HeadTime>00:00:00:00</HeadTime>
        <ToolRow>
          <SnapBtn>
            <Svg width="12" height="12" viewBox="0 0 12 12">
              <path d="M11 3H5a3 3 0 0 0 0 6h6" fill="none" stroke="#ddd" strokeWidth="2" />
              <path d="M8 3h3M8 9h3" stroke="#fff" strokeWidth="2" />
            </Svg>
          </SnapBtn>
          <Svg width="12" height="16" viewBox="0 0 12 16">
            <circle cx="6" cy="6" r="5.500" fill="#a5a5a5" />
            <circle cx="6" cy="6" r="2" fill="#d8d8d8" />
            <path d="M3.500 13h5L6 16z" fill="#c0c0c0" />
          </Svg>
          <Svg width="10" height="12" viewBox="0 0 10 12">
            <path d="M0 4 5 0l5 4v8H0z" fill="#dcdcdc" />
          </Svg>
        </ToolRow>
      </HeadLeft>
      <HeadRight>
        <TimelineTrough>
          <NavBar $w={333} />
        </TimelineTrough>
        <TimelineRuler $tick={46} $offset={0} $y={20}>
          <RulerLabel $w={331}>00:00</RulerLabel>
          <RulerLabel $w={362}>00:00:05:00</RulerLabel>
          <RulerLabel>00:00:10:00</RulerLabel>
        </TimelineRuler>
        <WorkBar>
          <WorkRange>
            <WorkGrip />
          </WorkRange>
        </WorkBar>
      </HeadRight>
    </TimelineHead>
    <TrackArea>
      <TrackList>
        <RedLine $top={0} $bottom={16} $left={164} />
        <TrackRow $h={25}>
          <TrackGutter />
          <TrackHead>
            <BlendLine />
          </TrackHead>
          <Lane />
        </TrackRow>
        <TrackRow $h={72}>
          <TrackGutter />
          <TrackHead>
            <TrackControls name="Video 3" />
            <BlendLine />
          </TrackHead>
          <Lane>
            <Clip>
              <ClipTitle>track matte</ClipTitle>
              <ClipBody>
                <MatteThumb />
              </ClipBody>
            </Clip>
          </Lane>
        </TrackRow>
        <TrackRow $h={72}>
          <TrackGutter />
          <TrackHead $on>
            <TrackControls name="Video 2" eye />
            <BlendLine />
          </TrackHead>
          <Lane>
            <Clip $on>
              <ClipTitle $on>brown clip</ClipTitle>
              <SelectedBody>
                <Cell $c="#a4c2bc" />
                <Cell $c="#5e3b3c" />
                <Cell $c="#c0bcd9" />
                <Cell $c="#4a4a34" />
                <Cell $c="#a4c2bc" $span={2} />
                <Cell $c="#4a4a34" $span={2} />
              </SelectedBody>
            </Clip>
          </Lane>
        </TrackRow>
        <TrackRow $h={73} $gap>
          <TrackGutter />
          <TrackHead>
            <TrackControls name="Video 1" eye />
            <BlendLine />
          </TrackHead>
          <Lane>
            <Clip>
              <ClipTitle>purple clip</ClipTitle>
              <ClipBody>
                <PurpleThumb />
              </ClipBody>
            </Clip>
          </Lane>
        </TrackRow>
        <TrackRow $h={19}>
          <TrackGutter />
          <TrackHead $on>
            <TrackControls name="Audio 1" audio />
          </TrackHead>
          <Lane />
        </TrackRow>
      </TrackList>
      <VScroll $w={18}>
        <ScrollBtn $h={25}>
          <Arrow $dir="up" />
        </ScrollBtn>
        <ScrollThumb />
        <ScrollBtn $h={40}>
          <Arrow $dir="down" />
        </ScrollBtn>
      </VScroll>
    </TrackArea>
    <TimelineFoot>
      <Mountain />
      <ZoomSlider $w={102} $at={54} style={{ margin: "0 9px" }} />
      <Mountain big />
      <HScroll>
        <Arrow $dir="left" />
        <HThumb />
        <HEnd>
          <Arrow $dir="right" />
        </HEnd>
      </HScroll>
    </TimelineFoot>
  </TimelinePanel>
);

export default function App() {
  return (
    <Root>
      <Global />
      <Frame>
        <LeftStrip>
          <LeftStripTab />
          <LeftStripBody />
        </LeftStrip>
        <Main>
          <TopRow>
            <EffectControls />
            <Program />
          </TopRow>
          <Timeline />
        </Main>
      </Frame>
    </Root>
  );
}
